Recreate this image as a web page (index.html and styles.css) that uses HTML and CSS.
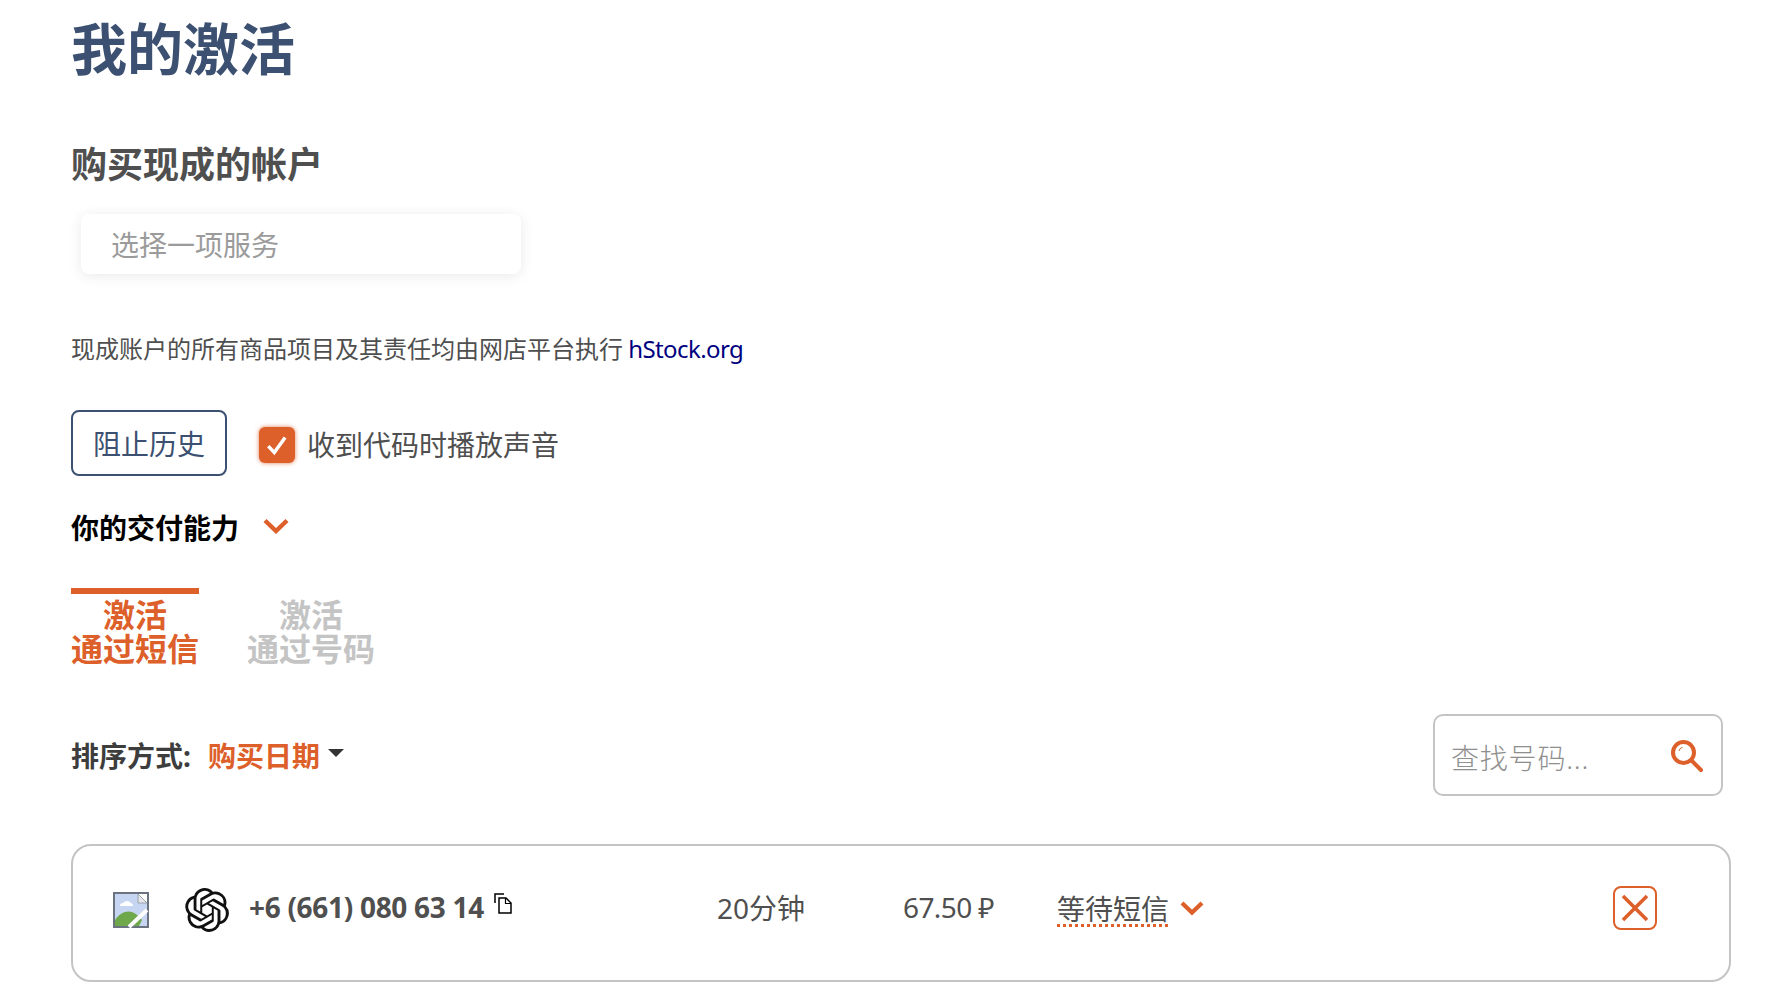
FILE: index.html
```html
<!DOCTYPE html>
<html lang="zh">
<head>
<meta charset="utf-8">
<title>我的激活</title>
<link rel="stylesheet" href="styles.css">
</head>
<body>
<main class="page">
  <h1 class="title">我的激活</h1>
  <h2 class="subtitle">购买现成的帐户</h2>
  <div class="service-select">选择一项服务</div>
  <p class="notice">现成账户的所有商品项目及其责任均由网店平台执行 <a class="notice-link" href="#">hStock.org</a></p>
  <div class="controls">
    <button class="block-btn" type="button">阻止历史</button>
    <label class="sound">
      <span class="check">
        <svg viewBox="0 0 24 24" width="26" height="26"><path d="M4 13l5.500 6L19.500 5" fill="none" stroke="#fff" stroke-width="3.200"/></svg>
      </span>
      收到代码时播放声音
    </label>
  </div>
  <div class="payment">
    <span>你的交付能力</span>
    <svg class="chev" viewBox="0 0 26 16" width="26" height="16"><path d="M2 2.500l11 10.500L24 2.500" fill="none" stroke="#dd5f2a" stroke-width="4.400"/></svg>
  </div>
  <div class="tabs">
    <div class="tab tab-active">激活<br>通过短信</div>
    <div class="tab">激活<br>通过号码</div>
  </div>
  <div class="toolbar">
    <div class="sort">
      <span class="sort-label">排序方式:</span>
      <span class="sort-value">购买日期</span>
      <span class="caret"></span>
    </div>
    <div class="search">
      <span class="search-text">查找号码...</span>
      <svg class="search-icon" viewBox="0 0 32 32" width="32" height="32">
        <circle cx="12.500" cy="12.500" r="10.500" fill="none" stroke="#dd5f2a" stroke-width="4"/>
        <path d="M20.500 20.500L30 30" stroke="#dd5f2a" stroke-width="4" stroke-linecap="round"/>
        <path d="M8 11a5 5 0 0 1 3.500-3.800" fill="none" stroke="#dd5f2a" stroke-width="1"/>
      </svg>
    </div>
  </div>
  <div class="card">
    <svg class="flag" viewBox="0 0 36 36" width="36" height="36">
      <rect x="1" y="1" width="34" height="34" fill="#c6d6f2" stroke="#6b7280" stroke-width="2"/>
      <path d="M2 34v-6c4-7 12-10 17-8 4 1.500 8 5 10 8l-3 6z" fill="#6fa84a"/>
      <path d="M7 14a3 3 0 0 1 3-3 5 5 0 0 1 8 0 3 3 0 0 1 2 3z" fill="#fff"/>
      <path d="M16 35L34 18" stroke="#fff" stroke-width="4"/>
      <path d="M25 2h9v9h-9z" fill="#fff"/>
      <path d="M25 2v9h9z" fill="#e5e7eb" stroke="#9ca3af" stroke-width="1"/>
    </svg>
    <svg class="logo" viewBox="0 0 24 24" width="44" height="44"><path fill="#111" d="M22.2819 9.8211a5.9847 5.9847 0 0 0-.5157-4.9108 6.0462 6.0462 0 0 0-6.5098-2.9A6.0651 6.0651 0 0 0 4.9807 4.1818a5.9847 5.9847 0 0 0-3.9977 2.9 6.0462 6.0462 0 0 0 .7427 7.0966 5.98 5.98 0 0 0 .511 4.9107 6.051 6.051 0 0 0 6.5146 2.9001A5.9847 5.9847 0 0 0 13.2599 24a6.0557 6.0557 0 0 0 5.7718-4.2058 5.9894 5.9894 0 0 0 3.9977-2.9001 6.0557 6.0557 0 0 0-.7475-7.0729zm-9.022 12.6081a4.4755 4.4755 0 0 1-2.8764-1.0408l.1419-.0804 4.7783-2.7582a.7948.7948 0 0 0 .3927-.6813v-6.7369l2.02 1.1686a.071.071 0 0 1 .038.052v5.5826a4.504 4.504 0 0 1-4.4945 4.4944zm-9.6607-4.1254a4.4708 4.4708 0 0 1-.5346-3.0137l.142.0852 4.783 2.7582a.7712.7712 0 0 0 .7806 0l5.8428-3.3685v2.3324a.0804.0804 0 0 1-.0332.0615L9.74 19.9502a4.4992 4.4992 0 0 1-6.1408-1.6464zM2.3408 7.8956a4.485 4.485 0 0 1 2.3655-1.9728V11.6a.7664.7664 0 0 0 .3879.6765l5.8144 3.3543-2.0201 1.1685a.0757.0757 0 0 1-.071 0l-4.8303-2.7865A4.504 4.504 0 0 1 2.3408 7.872zm16.5963 3.8558L13.1038 8.364 15.1192 7.2a.0757.0757 0 0 1 .071 0l4.8303 2.7913a4.4944 4.4944 0 0 1-.6765 8.1042v-5.6772a.79.79 0 0 0-.407-.667zm2.0107-3.0231l-.142-.0852-4.7735-2.7818a.7759.7759 0 0 0-.7854 0L9.409 9.2297V6.8974a.0662.0662 0 0 1 .0284-.0615l4.8303-2.7866a4.4992 4.4992 0 0 1 6.6802 4.66zM8.3065 12.863l-2.02-1.1638a.0804.0804 0 0 1-.038-.0567V6.0742a4.4992 4.4992 0 0 1 7.3757-3.4537l-.142.0805L8.704 5.459a.7948.7948 0 0 0-.3927.6813zm1.0976-2.3654l2.602-1.4998 2.6069 1.4998v2.9994l-2.5974 1.4997-2.6067-1.4997Z"/></svg>
    <div class="phone">
      <span class="phone-number">+6 (661) 080 63 14</span>
      <svg class="copy" viewBox="0 0 18 21" width="18" height="21">
        <path d="M1 10V1h9" fill="none" stroke="#000" stroke-width="1.500"/>
        <path d="M5 5h7l5 5v10H5z" fill="none" stroke="#000" stroke-width="1.500"/>
        <path d="M11.500 5v5.500H17" fill="none" stroke="#000" stroke-width="1.200"/>
      </svg>
    </div>
    <div class="cell">20分钟</div>
    <div class="cell cell-price">67.50 ₽</div>
    <div class="status">
      <span class="status-text">等待短信</span>
      <svg viewBox="0 0 24 16" width="24" height="16"><path d="M2 3l10 9.500L22 3" fill="none" stroke="#dd5f2a" stroke-width="4.200"/></svg>
    </div>
    <button class="close" type="button" aria-label="取消">
      <svg viewBox="0 0 28 28" width="28" height="28"><path d="M2 2l24 24M26 2L2 26" stroke="#dd5f2a" stroke-width="3.600"/></svg>
    </button>
  </div>
</main>
</body>
</html>
```
FILE: styles.css
```css
* { box-sizing: border-box; }
html, body { margin: 0; padding: 0; background: #fff; }
body {
  font-family: "Noto Sans", "Noto Sans CJK SC", sans-serif;
  color: #4f4f4f;
  height: 1008px;
  overflow: hidden;
}
.page { padding: 20px 41px 0 71px; }
.title {
  margin: 0;
  font-size: 56px;
  line-height: 56px;
  font-weight: 700;
  color: #3c5071;
}
.subtitle {
  margin: 69px 0 0;
  font-size: 36px;
  line-height: 40px;
  font-weight: 700;
  color: #4f4f4f;
}
.service-select {
  margin: 29px 0 0 10px;
  width: 440px;
  height: 60px;
  padding-left: 30px;
  border-radius: 8px;
  background: #fff;
  box-shadow: 0 2px 14px rgba(0, 0, 0, .09);
  font-size: 28px;
  line-height: 62px;
  color: #9b9b9b;
}
.notice {
  margin: 59px 0 0;
  font-size: 24px;
  line-height: 32px;
  color: #4f4f4f;
}
.notice-link { color: #00007f; text-decoration: none; letter-spacing: -0.6px; margin-left: -1px; }
.controls {
  margin-top: 45px;
  display: flex;
  align-items: center;
}
.block-btn {
  width: 156px;
  height: 66px;
  padding: 0;
  background: #fff;
  border: 2px solid #3c5071;
  border-radius: 8px;
  font: inherit;
  font-size: 28px;
  color: #3c5071;
}
.sound {
  margin: 4px 0 0 32px;
  display: flex;
  align-items: center;
  gap: 12px;
  font-size: 28px;
  line-height: 36px;
}
.check {
  width: 36px;
  height: 36px;
  border-radius: 6px;
  background: #dd5f2a;
  box-shadow: 0 0 4px rgba(221, 95, 42, .8);
  display: flex;
  align-items: center;
  justify-content: center;
}
.payment {
  margin: 34px 0 0;
  display: flex;
  align-items: center;
  gap: 24px;
  font-size: 28px;
  line-height: 36px;
  font-weight: 700;
  color: #000;
}
.chev { margin-top: -4px; }
.tabs {
  margin-top: 42px;
  display: flex;
  gap: 48px;
}
.tab {
  padding-top: 4px;
  border-top: 6px solid transparent;
  width: 128px;
  text-align: center;
  font-size: 32px;
  line-height: 34px;
  font-weight: 700;
  color: #c4c4c4;
}
.tab-active {
  color: #dd5f2a;
  border-top-color: #dd5f2a;
}
.toolbar {
  margin: 48px 8px 0 0;
  display: flex;
  justify-content: space-between;
  align-items: center;
}
.sort {
  display: flex;
  align-items: center;
  font-size: 28px;
  font-weight: 700;
  line-height: 36px;
  margin-top: 1px;
}
.sort-label { color: #3d3d3d; width: 137px; }
.sort-value { color: #dd5f2a; }
.caret {
  margin: -6px 0 0 8px;
  border-left: 8px solid transparent;
  border-right: 8px solid transparent;
  border-top: 8px solid #333;
}
.search {
  width: 290px;
  height: 82px;
  padding: 0 18px 0 16px;
  border: 2px solid #c4c4c4;
  border-radius: 10px;
  display: flex;
  align-items: center;
  justify-content: space-between;
}
.search-text {
  font-size: 28px;
  font-weight: 300;
  letter-spacing: 0.8px;
  color: #8f8f8f;
  margin-top: 4px;
}
.search-icon { margin-top: 2px; }
.card {
  margin-top: 48px;
  height: 138px;
  padding: 0 0 10px 40px;
  border: 2px solid #c4c4c4;
  border-radius: 20px;
  display: grid;
  grid-template-columns: 72px 64px 468px 186px 155px 555px 44px;
  align-items: center;
}
.flag, .logo { display: block; margin-top: 4px; }
.phone {
  display: flex;
  align-items: center;
  gap: 10px;
  margin-top: -2px;
}
.phone-number {
  font-size: 28px;
  font-weight: 700;
  letter-spacing: -0.300px;
  color: #4f4f4f;
}
.copy { margin-top: -8px; }
.cell { font-size: 28px; color: #4f4f4f; margin-top: -2px; }
.cell-price { letter-spacing: -0.6px; }
.status {
  display: flex;
  align-items: center;
  gap: 11px;
  font-size: 28px;
  margin-left: -1px;
}
.status-text {
  text-decoration: underline dotted #dd5f2a 3px;
  text-underline-offset: 4px;
}
.close {
  width: 44px;
  height: 44px;
  padding: 0;
  background: #fff;
  border: 2px solid #dd5f2a;
  border-radius: 8px;
  display: flex;
  align-items: center;
  justify-content: center;
}
```
